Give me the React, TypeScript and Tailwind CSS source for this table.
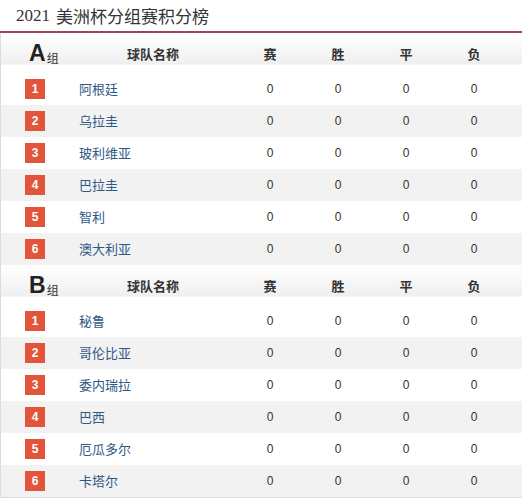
import React from "react"

interface Group {
  name: string
  teams: string[]
}

const groups: Group[] = [
  { name: "A", teams: ["阿根廷", "乌拉圭", "玻利维亚", "巴拉圭", "智利", "澳大利亚"] },
  { name: "B", teams: ["秘鲁", "哥伦比亚", "委内瑞拉", "巴西", "厄瓜多尔", "卡塔尔"] },
]

const cols = "grid grid-cols-[78px_157px_68px_68px_68px_68px]"

const GroupTable: React.FC<{ group: Group }> = ({ group }) => (
  <div>
    <div
      className={`${cols} h-[40px] pt-[1px] items-center bg-[linear-gradient(to_bottom,#ffffff_0%,#efefef_78%,#ffffff_80%)]`}
    >
      <div className="pl-[28px] flex items-end">
        <span className="text-[23px] font-bold leading-none text-[#222] font-['Liberation_Sans',sans-serif]">
          {group.name}
        </span>
        <span className="text-[12px] leading-none text-[#333] ml-[1px] mb-[1px]">组</span>
      </div>
      <div className="text-center pr-[9px] text-[13px] font-bold text-[#333]">球队名称</div>
      <div className="text-center text-[13px] font-bold text-[#333]">赛</div>
      <div className="text-center text-[13px] font-bold text-[#333]">胜</div>
      <div className="text-center text-[13px] font-bold text-[#333]">平</div>
      <div className="text-center text-[13px] font-bold text-[#333]">负</div>
    </div>
    {group.teams.map((team, i) => (
      <div
        key={team}
        className={`${cols} h-[32px] items-center ${i % 2 === 1 ? "bg-[#f2f2f2]" : "bg-white"}`}
      >
        <div className="pl-[24px]">
          <div className="w-[20px] h-[20px] bg-[#e2553a] text-white text-[12px] font-bold flex items-center justify-center font-['Liberation_Sans',sans-serif]">
            {i + 1}
          </div>
        </div>
        <div className="text-[13px] text-[#2f5885]">{team}</div>
        {[0, 1, 2, 3].map((k) => (
          <div key={k} className="text-center text-[12px] text-[#333] font-['Liberation_Sans',sans-serif]">
            0
          </div>
        ))}
      </div>
    ))}
  </div>
)

export default function App() {
  return (
    <div className="w-[522px] h-[502px] bg-white font-['Noto_Sans_CJK_SC','Liberation_Sans',sans-serif]">
      <div className="h-[31px] pl-[16px] flex items-center text-[17px] text-[#333] font-['Liberation_Serif','Noto_Sans_CJK_SC',serif]">
        2021 <span className="ml-[6px] font-['Noto_Sans_CJK_SC',sans-serif]">美洲杯分组赛积分榜</span>
      </div>
      <div className="h-[2px] bg-[#9c4652]" />
      <div className="border-l border-b border-[#dcdcdc]">
        {groups.map((g) => (
          <GroupTable key={g.name} group={g} />
        ))}
      </div>
    </div>
  )
}
